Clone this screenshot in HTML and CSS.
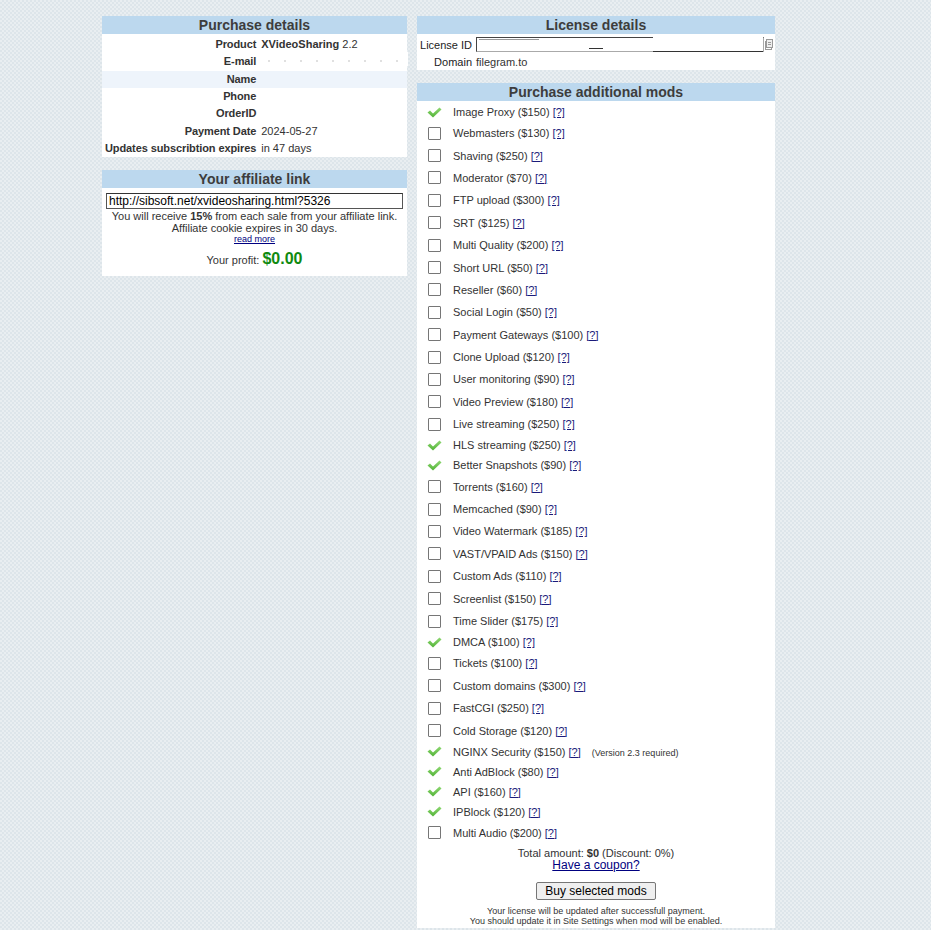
FILE: index.html
```html
<!DOCTYPE html>
<html>
<head>
<meta charset="utf-8">
<link rel="stylesheet" href="styles.css">
</head>
<body>
<div class="page">
  <div class="col col-left">
    <div class="panel">
      <div class="ph">Purchase details</div>
      <table class="det">
        <tr><th>Product</th><td><b>XVideoSharing</b> 2.2</td></tr>
        <tr><th>E-mail</th><td><span class="redact"></span></td></tr>
        <tr class="hl"><th>Name</th><td></td></tr>
        <tr><th>Phone</th><td></td></tr>
        <tr><th>OrderID</th><td></td></tr>
        <tr><th>Payment Date</th><td>2024-05-27</td></tr>
        <tr><th>Updates subscribtion expires</th><td>in 47 days</td></tr>
      </table>
    </div>
    <div class="panel aff">
      <div class="ph">Your affiliate link</div>
      <div class="affbody">
        <div class="afflink">http://sibsoft.net/xvideosharing.html?5326</div>
        <div class="afftext">You will receive <b>15%</b> from each sale from your affiliate link.<br>Affiliate cookie expires in 30 days.</div>
        <a class="readmore" href="#">read more</a>
        <div class="profit">Your profit: <span class="money">$0.00</span></div>
      </div>
    </div>
  </div>
  <div class="col col-right">
    <div class="panel">
      <div class="ph">License details</div>
      <div class="lic">
        <div class="licrow"><span class="lk">License ID</span><span class="licinput"><span class="r1"></span><span class="r2"></span><span class="r3"></span></span><svg class="copy" width="8" height="11" viewBox="0 0 8 11"><rect x="0.5" y="2.5" width="6" height="8" fill="#fff" stroke="#999"/><rect x="1.5" y="0.5" width="6" height="8" fill="#eee" stroke="#999"/><line x1="3" y1="3.5" x2="6" y2="3.5" stroke="#999"/><line x1="3" y1="5.5" x2="6" y2="5.5" stroke="#999"/></svg></div>
        <div class="licrow"><span class="lk">Domain</span><span>filegram.to</span></div>
      </div>
    </div>
    <div class="panel mods">
      <div class="ph">Purchase additional mods</div>
      <ul class="modlist">
        <li class="on"><span class="ic"><svg class="tick" width="15" height="11" viewBox="0 0 15 11"><defs><linearGradient id="g" x1="0" y1="0" x2="0" y2="1"><stop offset="0" stop-color="#8fd873"/><stop offset="1" stop-color="#52b336"/></linearGradient></defs><path d="M0.5 5.5 L3 3.5 L6 6.5 L12.5 0.5 L14.5 2.5 L6 10.5 Z" fill="url(#g)"/></svg></span><span>Image Proxy ($150) <a href="#">[?]</a></span></li>
        <li><span class="ic"><span class="cb"></span></span><span>Webmasters ($130) <a href="#">[?]</a></span></li>
        <li><span class="ic"><span class="cb"></span></span><span>Shaving ($250) <a href="#">[?]</a></span></li>
        <li><span class="ic"><span class="cb"></span></span><span>Moderator ($70) <a href="#">[?]</a></span></li>
        <li><span class="ic"><span class="cb"></span></span><span>FTP upload ($300) <a href="#">[?]</a></span></li>
        <li><span class="ic"><span class="cb"></span></span><span>SRT ($125) <a href="#">[?]</a></span></li>
        <li><span class="ic"><span class="cb"></span></span><span>Multi Quality ($200) <a href="#">[?]</a></span></li>
        <li><span class="ic"><span class="cb"></span></span><span>Short URL ($50) <a href="#">[?]</a></span></li>
        <li><span class="ic"><span class="cb"></span></span><span>Reseller ($60) <a href="#">[?]</a></span></li>
        <li><span class="ic"><span class="cb"></span></span><span>Social Login ($50) <a href="#">[?]</a></span></li>
        <li><span class="ic"><span class="cb"></span></span><span>Payment Gateways ($100) <a href="#">[?]</a></span></li>
        <li><span class="ic"><span class="cb"></span></span><span>Clone Upload ($120) <a href="#">[?]</a></span></li>
        <li><span class="ic"><span class="cb"></span></span><span>User monitoring ($90) <a href="#">[?]</a></span></li>
        <li><span class="ic"><span class="cb"></span></span><span>Video Preview ($180) <a href="#">[?]</a></span></li>
        <li><span class="ic"><span class="cb"></span></span><span>Live streaming ($250) <a href="#">[?]</a></span></li>
        <li class="on"><span class="ic"><svg class="tick" width="15" height="11" viewBox="0 0 15 11"><path d="M0.5 5.5 L3 3.5 L6 6.5 L12.5 0.5 L14.5 2.5 L6 10.5 Z" fill="url(#g)"/></svg></span><span>HLS streaming ($250) <a href="#">[?]</a></span></li>
        <li class="on"><span class="ic"><svg class="tick" width="15" height="11" viewBox="0 0 15 11"><path d="M0.5 5.5 L3 3.5 L6 6.5 L12.5 0.5 L14.5 2.5 L6 10.5 Z" fill="url(#g)"/></svg></span><span>Better Snapshots ($90) <a href="#">[?]</a></span></li>
        <li><span class="ic"><span class="cb"></span></span><span>Torrents ($160) <a href="#">[?]</a></span></li>
        <li><span class="ic"><span class="cb"></span></span><span>Memcached ($90) <a href="#">[?]</a></span></li>
        <li><span class="ic"><span class="cb"></span></span><span>Video Watermark ($185) <a href="#">[?]</a></span></li>
        <li><span class="ic"><span class="cb"></span></span><span>VAST/VPAID Ads ($150) <a href="#">[?]</a></span></li>
        <li><span class="ic"><span class="cb"></span></span><span>Custom Ads ($110) <a href="#">[?]</a></span></li>
        <li><span class="ic"><span class="cb"></span></span><span>Screenlist ($150) <a href="#">[?]</a></span></li>
        <li><span class="ic"><span class="cb"></span></span><span>Time Slider ($175) <a href="#">[?]</a></span></li>
        <li class="on"><span class="ic"><svg class="tick" width="15" height="11" viewBox="0 0 15 11"><path d="M0.5 5.5 L3 3.5 L6 6.5 L12.5 0.5 L14.5 2.5 L6 10.5 Z" fill="url(#g)"/></svg></span><span>DMCA ($100) <a href="#">[?]</a></span></li>
        <li><span class="ic"><span class="cb"></span></span><span>Tickets ($100) <a href="#">[?]</a></span></li>
        <li><span class="ic"><span class="cb"></span></span><span>Custom domains ($300) <a href="#">[?]</a></span></li>
        <li><span class="ic"><span class="cb"></span></span><span>FastCGI ($250) <a href="#">[?]</a></span></li>
        <li><span class="ic"><span class="cb"></span></span><span>Cold Storage ($120) <a href="#">[?]</a></span></li>
        <li class="on"><span class="ic"><svg class="tick" width="15" height="11" viewBox="0 0 15 11"><path d="M0.5 5.5 L3 3.5 L6 6.5 L12.5 0.5 L14.5 2.5 L6 10.5 Z" fill="url(#g)"/></svg></span><span>NGINX Security ($150) <a href="#">[?]</a> <small class="req">(Version 2.3 required)</small></span></li>
        <li class="on"><span class="ic"><svg class="tick" width="15" height="11" viewBox="0 0 15 11"><path d="M0.5 5.5 L3 3.5 L6 6.5 L12.5 0.5 L14.5 2.5 L6 10.5 Z" fill="url(#g)"/></svg></span><span>Anti AdBlock ($80) <a href="#">[?]</a></span></li>
        <li class="on"><span class="ic"><svg class="tick" width="15" height="11" viewBox="0 0 15 11"><path d="M0.5 5.5 L3 3.5 L6 6.5 L12.5 0.5 L14.5 2.5 L6 10.5 Z" fill="url(#g)"/></svg></span><span>API ($160) <a href="#">[?]</a></span></li>
        <li class="on"><span class="ic"><svg class="tick" width="15" height="11" viewBox="0 0 15 11"><path d="M0.5 5.5 L3 3.5 L6 6.5 L12.5 0.5 L14.5 2.5 L6 10.5 Z" fill="url(#g)"/></svg></span><span>IPBlock ($120) <a href="#">[?]</a></span></li>
        <li><span class="ic"><span class="cb"></span></span><span>Multi Audio ($200) <a href="#">[?]</a></span></li>
      </ul>
      <div class="total">Total amount: <b>$0</b> (Discount: 0%)</div>
      <div class="coupon"><a href="#">Have a coupon?</a></div>
      <div class="btnwrap"><button class="buy">Buy selected mods</button></div>
      <div class="note">Your license will be updated after successfull payment.<br>You should update it in Site Settings when mod will be enabled.</div>
    </div>
  </div>
</div>
</body>
</html>
```
FILE: styles.css
```css
html, body {
  margin: 0;
  padding: 0;
}
body {
  font-family: "Liberation Sans", Arial, sans-serif;
  font-size: 11px;
  color: #333;
  background-color: #e2e8ec;
  background-image: repeating-conic-gradient(#dde5ea 0 25%, #e9eef1 0 50%);
  background-size: 4px 4px;
  min-height: 930px;
}
.page {
  display: flex;
  align-items: flex-start;
  gap: 10px;
  padding: 16px 0 0 102px;
}
.col {
  display: flex;
  flex-direction: column;
}
.col-left { width: 305px; gap: 13px; }
.col-right { width: 358px; gap: 13px; }
.panel {
  background: #fff;
}
.ph {
  background: #bcd8ee;
  color: #3d3d3d;
  font-weight: bold;
  font-size: 14px;
  height: 18px;
  line-height: 18px;
  text-align: center;
}
.det {
  border-collapse: collapse;
  width: 100%;
  margin-top: 2px;
}
.det tr { height: 17.3px; }
.det th {
  text-align: right;
  font-weight: bold;
  white-space: nowrap;
  padding: 0 1px 0 3px;
  width: 150px;
  font-size: 11px;
  line-height: 13px;
  letter-spacing: -0.1px;
}
.det td {
  padding: 0 0 0 4px;
  font-size: 11px;
  line-height: 13px;
  position: relative;
}
.det tr.hl { background: #eef4fb; }
.redact {
  position: absolute;
  left: 0;
  top: -1px;
  width: 151px;
  height: 14px;
  background: #fff;
  background-image: radial-gradient(circle, #bbb 0.6px, transparent 0.8px);
  background-size: 16px 14px;
  background-position: 4px 2px;
}
.affbody {
  padding: 5px 4px 6px;
  text-align: center;
}
.afflink {
  border: 1px solid #555;
  border-top-color: #333;
  height: 14px;
  line-height: 14px;
  font-size: 12px;
  color: #000;
  text-align: left;
  padding: 0 2px;
}
.afftext {
  margin-top: 1px;
  line-height: 12px;
}
.readmore {
  display: block;
  font-size: 9px;
  line-height: 11px;
  color: #000080;
}
.profit {
  margin-top: 4px;
  line-height: 20px;
}
.money {
  color: #108a10;
  font-weight: bold;
  font-size: 16px;
}
.lic { padding: 2px 0 0; height: 36px; box-sizing: border-box; }
.licrow {
  display: flex;
  align-items: center;
  height: 17px;
}
.lk {
  width: 55px;
  text-align: right;
  padding-right: 4px;
  font-weight: normal;
  color: #222;
}
.licinput {
  position: relative;
  width: 286px;
  height: 13px;
  border: 1px solid #444;
  border-right-color: #aaa;
  border-bottom-color: #aaa;
  background: #fff;
}
.licinput .r1 { position: absolute; left: 2px; top: 1px; width: 60px; height: 3px; border-top: 1px solid #999; }
.licinput .r2 { position: absolute; left: 112px; top: 10px; width: 14px; border-top: 1px solid #333; }
.licinput .r3 { position: absolute; left: 176px; top: -1px; width: 110px; height: 14px; border-bottom: 1px solid #333; background: #fff; }
.copy { margin-left: 1px; }
.modlist {
  list-style: none;
  margin: 0;
  padding: 1px 0 0;
}
.modlist li {
  display: flex;
  align-items: center;
  height: 22.4px;
}
.modlist li.on { height: 20px; }
.ic {
  width: 36px;
  display: flex;
  align-items: center;
  padding-left: 10px;
  box-sizing: border-box;
}
.cb {
  display: block;
  width: 11px;
  height: 11px;
  border: 1px solid #767676;
  border-radius: 1px;
  background: #fff;
  margin-left: 1px;
}
.tick { display: block; }
a { color: #000080; }
.modlist a { color: #1a1a7a; }
.req { font-size: 9px; margin-left: 8px; }
.total {
  text-align: center;
  margin-top: 3px;
  line-height: 12px;
}
.coupon {
  text-align: center;
  font-size: 12px;
  line-height: 12px;
}
.btnwrap {
  text-align: center;
  margin-top: 11px;
}
.buy {
  font-family: "Liberation Sans", Arial, sans-serif;
  font-size: 12px;
  color: #000;
  background: #efefef;
  border: 1px solid #767676;
  border-radius: 2px;
  height: 18px;
  padding: 0 8px;
  line-height: 14px;
}
.note {
  text-align: center;
  font-size: 9px;
  line-height: 10px;
  padding: 6px 0 2px;
}
```
